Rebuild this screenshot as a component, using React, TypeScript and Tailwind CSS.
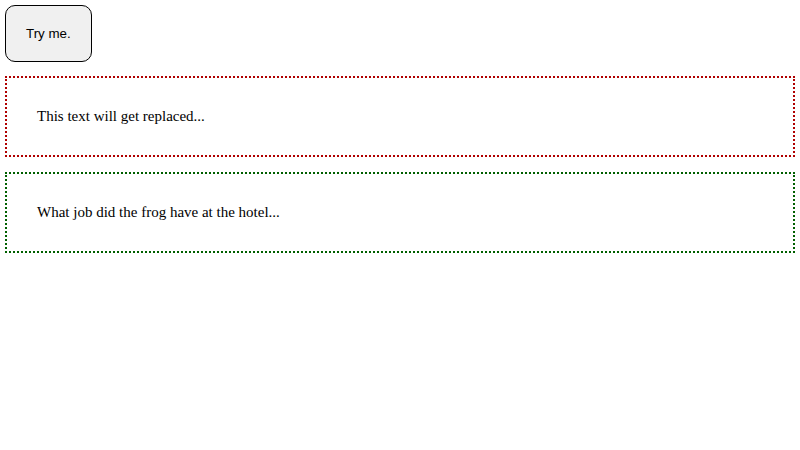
import React from 'react';

export default function App() {
  return (
    <div className="flex flex-col bg-white min-h-[450px] font-['Liberation_Serif',serif] text-black">
      <button className="self-start m-[5px] p-[20px] rounded-[10px] border border-black bg-[#f0f0f0] font-['Liberation_Sans',Arial,sans-serif] text-[13.333px] leading-[normal]">
        Try me.
      </button>
      <div className="mx-[5px] mt-[9px] p-[30px] border-2 border-dotted border-[#b00000] text-[15px] leading-[normal]">
        This text will get replaced...
      </div>
      <div className="mx-[5px] mt-[15px] p-[30px] border-2 border-dotted border-[#006000] text-[15px] leading-[normal]">
        What job did the frog have at the hotel...
      </div>
    </div>
  );
}
